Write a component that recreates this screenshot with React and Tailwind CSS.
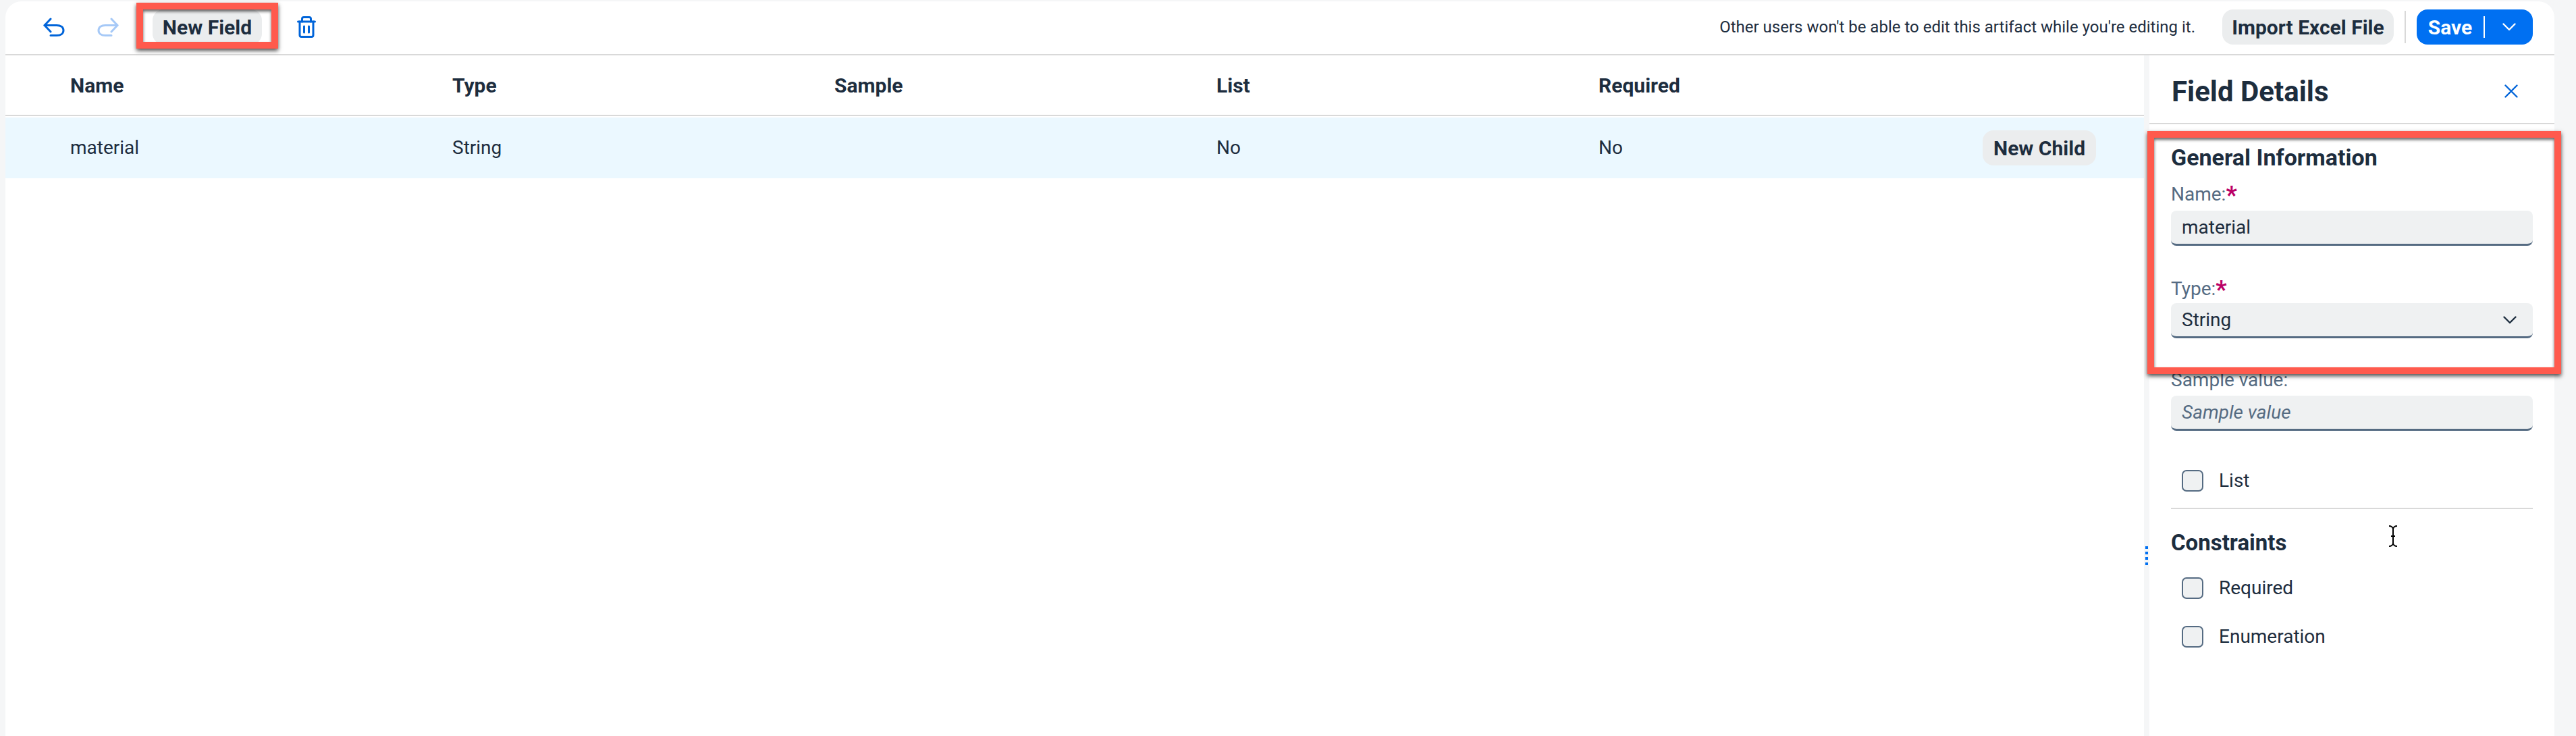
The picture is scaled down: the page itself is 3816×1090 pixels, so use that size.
const Undo = ({ className }) => (
  <svg viewBox="0 0 32 28" className={className} fill="none" stroke="currentColor" strokeWidth="3" strokeLinecap="round" strokeLinejoin="round">
    <path d="M11 2 2 11.5 11 21" />
    <path d="M2 11.5h18c6 0 10 3 10 7.5s-4 7.5-10 7.5H11" />
  </svg>
);

const Redo = ({ className }) => (
  <svg viewBox="0 0 32 28" className={className} fill="none" stroke="currentColor" strokeWidth="3" strokeLinecap="round" strokeLinejoin="round">
    <path d="M21 2l9 9.5-9 9.5" />
    <path d="M30 11.5H12c-6 0-10 3-10 7.5s4 7.5 10 7.5h9" />
  </svg>
);

const Trash = () => (
  <svg viewBox="0 0 28 32" className="w-[28px] h-[32px] text-[#0064d9]" fill="none" stroke="currentColor" strokeWidth="3" strokeLinecap="round" strokeLinejoin="round">
    <path d="M1.5 8h25" />
    <path d="M7.5 8V4a2.5 2.5 0 0 1 2.5-2.5h8A2.5 2.5 0 0 1 20.500 4v4" />
    <path d="M4 8v20a2.500 2.500 0 0 0 2.500 2.500h15a2.500 2.500 0 0 0 2.500-2.500V8" />
    <path d="M10.500 15v9M17.500 15v9" />
  </svg>
);

const Chevron = ({ className }) => (
  <svg viewBox="0 0 20 12" className={className} fill="none" stroke="currentColor" strokeWidth="2.4" strokeLinecap="round" strokeLinejoin="round">
    <path d="M1.5 1.5 10 10l8.5-8.5" />
  </svg>
);

const Pill = ({ children, className }) => (
  <button className={`h-[52px] rounded-[16px] bg-[#ebedee] text-[30px] font-bold text-[#1d2d3e] ${className}`}>
    {children}
  </button>
);

const Label = ({ children, required }) => (
  <div className="h-[34px] leading-[34px] text-[28px] text-[#556b82]">
    {children}
    {required && <span className="relative top-[4px] text-[#bb0066] font-bold text-[36px] leading-none">*</span>}
  </div>
);

const Field = ({ children }) => (
  <div className="h-[52px] flex items-center justify-between pl-4 pr-6 rounded-[8px] bg-[#eff1f2] border-b-[3px] border-[#556b82] text-[28px] text-[#1d2d3e]">
    {children}
  </div>
);

const Check = ({ label }) => (
  <div className="h-[32px] flex items-center gap-[23px] pl-4 text-[28px] text-[#1d2d3e]">
    <span className="w-[32px] h-[32px] rounded-[7px] bg-[#eff1f2] border-2 border-[#556b82]" />
    {label}
  </div>
);

const columns = ["Name", "Type", "Sample", "List", "Required"];

export default function App() {
  return (
    <div className="relative h-[1090px] overflow-hidden bg-[#f5f6f7] pt-[2px] pl-[8px] pr-[32px] font-['Roboto',sans-serif]">
      <div className="h-full rounded-t-[24px] bg-white flex flex-col">
        {/* Toolbar */}
        <div className="h-[78px] shrink-0 flex items-center pl-[56px] pr-[32px] pb-[2px]">
          <Undo className="w-[32px] h-[28px] text-[#0064d9]" />
          <Redo className="w-[32px] h-[28px] ml-[48px] text-[#a6c9f7]" />
          <Pill className="w-[162px] ml-[50px]">New Field</Pill>
          <div className="ml-[52px]"><Trash /></div>
          <span className="ml-auto text-[24px] text-[#1d2d3e]">
            Other users won't be able to edit this artifact while you're editing it.
          </span>
          <Pill className="w-[254px] ml-[40px]">Import Excel File</Pill>
          <div className="w-[2px] h-[48px] ml-[16px] bg-[#d9d9d9]" />
          <div className="w-[172px] h-[52px] ml-[16px] rounded-[16px] bg-[#0070f2] flex items-center text-white">
            <span className="w-[99px] text-center text-[30px] font-bold">Save</span>
            <span className="w-[2px] h-[32px] bg-white" />
            <span className="flex-1 flex justify-center">
              <Chevron className="w-[20px] h-[12px]" />
            </span>
          </div>
        </div>

        <div className="flex-1 flex border-t-2 border-[#d9d9d9]">
          {/* Table */}
          <div className="w-[3168px] shrink-0 text-[28px] text-[#1d2d3e]">
            <div className="h-[90px] grid grid-cols-[566px_566px_566px_566px_1fr] items-center pl-[96px] border-b-2 border-[#d9d9d9] text-[30px] font-bold">
              {columns.map((c) => (
                <div key={c}>{c}</div>
              ))}
            </div>
            <div className="h-[90px] mt-[2px] grid grid-cols-[566px_566px_566px_566px_1fr] items-center pl-[96px] pr-[71px] bg-[#ebf8ff]">
              <div>material</div>
              <div>String</div>
              <div />
              <div>No</div>
              <div className="flex items-center justify-between">
                No
                <Pill className="w-[168px]">New Child</Pill>
              </div>
            </div>
          </div>

          {/* Splitter */}
          <div className="w-[8px] shrink-0 bg-[#f5f6f7] flex flex-col items-center pt-[727px] relative">
            <div className="flex flex-col gap-[4px] absolute left-[2px]">
              <span className="w-[4px] h-[4px] bg-[#0070f2]" />
              <span className="w-[4px] h-[4px] bg-[#0070f2]" />
              <span className="w-[4px] h-[4px] bg-[#0070f2]" />
              <span className="w-[4px] h-[4px] bg-[#0070f2]" />
            </div>
          </div>

          {/* Details panel */}
          <div className="flex-1 flex flex-col">
            <div className="h-[102px] shrink-0 flex items-center justify-between pl-[33px] pr-[54px] border-b-2 border-[#d9d9d9]">
              <span className="text-[42px] font-bold text-[#1d2d3e] mt-[6px]">Field Details</span>
              <svg viewBox="0 0 20 20" className="w-[20px] h-[20px] mt-[6px] text-[#0064d9]" fill="none" stroke="currentColor" strokeWidth="2.4" strokeLinecap="round">
                <path d="M1.5 1.5l17 17M18.5 1.5l-17 17" />
              </svg>
            </div>
            <div className="pl-[32px] pr-[32px] pt-[29px]">
              <div className="h-[40px] leading-[40px] text-[34px] font-bold text-[#1d2d3e]">General Information</div>
              <div className="mt-[14px]"><Label required>Name:</Label></div>
              <div className="mt-[11px]"><Field>material</Field></div>
              <div className="mt-[43px]"><Label required>Type:</Label></div>
              <div className="mt-[8px]">
                <Field>
                  String
                  <Chevron className="w-[20px] h-[12px]" />
                </Field>
              </div>
              <div className="mt-[45px]"><Label>Sample value:</Label></div>
              <div className="mt-[6px]">
                <Field><span className="italic text-[#556b82]">Sample value</span></Field>
              </div>
              <div className="mt-[58px]"><Check label="List" /></div>
              <div className="mt-[24px] h-[2px] bg-[#d9d9d9]" />
              <div className="mt-[30px] h-[40px] leading-[40px] text-[33px] font-bold text-[#1d2d3e]">Constraints</div>
              <div className="mt-[31px]"><Check label="Required" /></div>
              <div className="mt-[40px]"><Check label="Enumeration" /></div>
            </div>
          </div>
        </div>
      </div>

      {/* Annotation boxes */}
      <div className="absolute left-[202px] top-[4px] w-[210px] h-[68px] border-[10px] border-[#ff5a4d] shadow-[0_3px_6px_rgba(0,0,0,0.7),inset_0_3px_4px_rgba(0,0,0,0.6)]" />
      <div className="absolute left-[3181px] top-[194px] w-[613px] h-[360px] border-[10px] border-[#ff5a4d] shadow-[0_3px_6px_rgba(0,0,0,0.7),inset_0_3px_4px_rgba(0,0,0,0.6)]" />

      {/* Text cursor */}
      <svg viewBox="0 0 16 32" className="absolute left-[3537px] top-[778px] w-[16px] h-[32px] text-black" fill="none" stroke="currentColor" strokeWidth="2">
        <path d="M2 1c3 0 5 1 6 4v22c-1 3-3 4-6 4M14 1c-3 0-5 1-6 4v22c1 3 3 4 6 4M5 16h6" />
      </svg>
    </div>
  );
}
